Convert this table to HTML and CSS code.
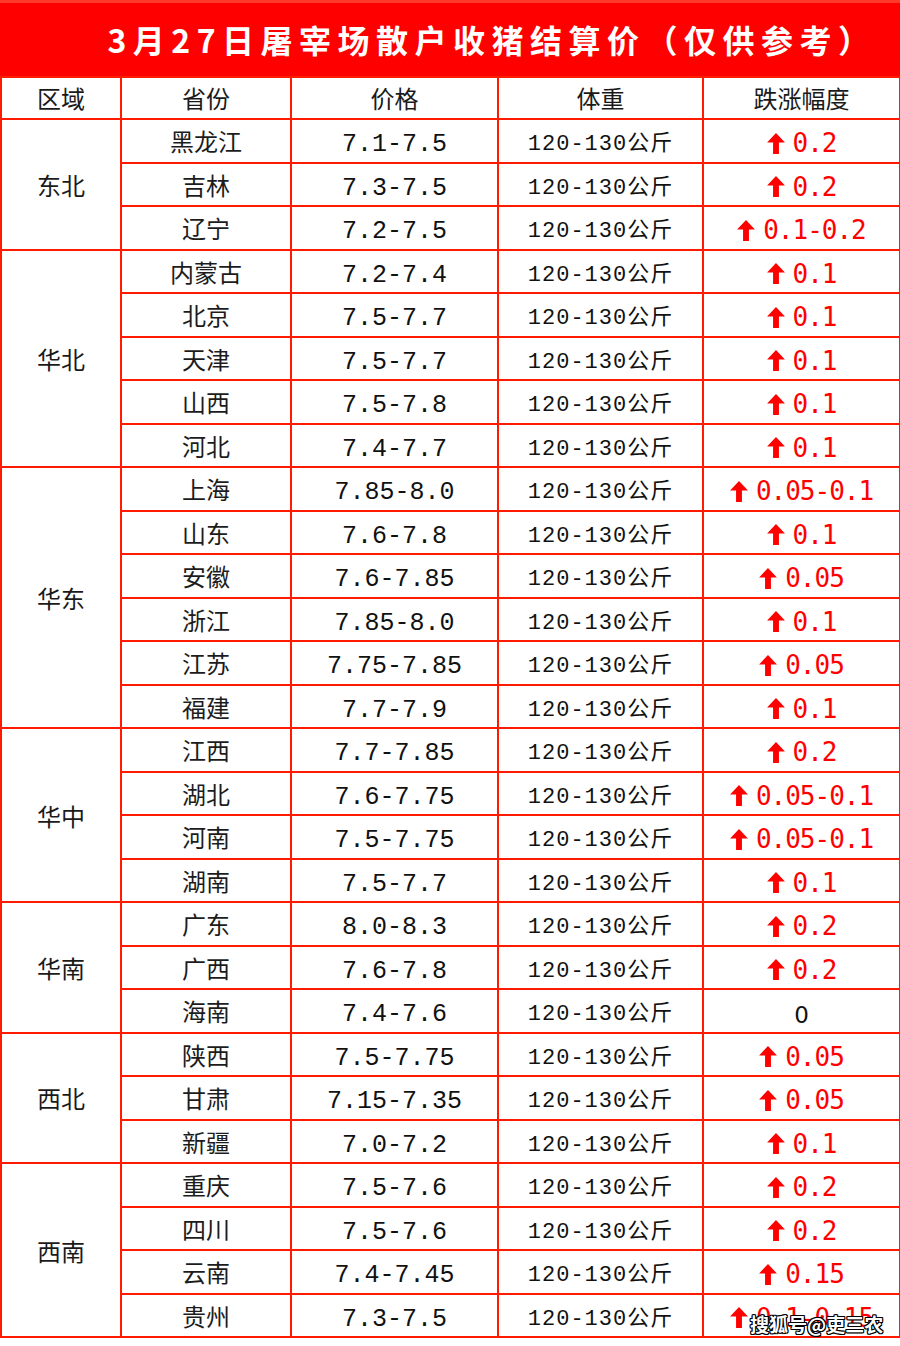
FILE: index.html
```html
<!DOCTYPE html>
<html lang="zh-CN">
<head>
<meta charset="utf-8">
<title>3月27日屠宰场散户收猪结算价</title>
<link rel="stylesheet" href="styles.css">
</head>
<body>
<svg class="defs" width="0" height="0" aria-hidden="true">
  <symbol id="up" viewBox="0 0 17 20">
    <path d="M8.5 0 L17 9 L11.3 9 L11.3 20 L5.7 20 L5.7 9 L0 9 Z" fill="#ff0000"/>
  </symbol>
</svg>
<div class="page">
  <div class="title">3月27日屠宰场散户收猪结算价（仅供参考）</div>
  <table class="grid">
    <colgroup>
      <col class="c1"><col class="c2"><col class="c3"><col class="c4"><col class="c5">
    </colgroup>
    <thead>
      <tr><th>区域</th><th>省份</th><th>价格</th><th>体重</th><th>跌涨幅度</th></tr>
    </thead>
    <tbody>
      <tr><td class="region" rowspan="3">东北</td><td class="prov">黑龙江</td><td class="price">7.1-7.5</td><td class="wt">120-130公斤</td><td class="chg"><span class="up"><svg><use href="#up"/></svg>0.2</span></td></tr>
      <tr><td class="prov">吉林</td><td class="price">7.3-7.5</td><td class="wt">120-130公斤</td><td class="chg"><span class="up"><svg><use href="#up"/></svg>0.2</span></td></tr>
      <tr class="end"><td class="prov">辽宁</td><td class="price">7.2-7.5</td><td class="wt">120-130公斤</td><td class="chg"><span class="up"><svg><use href="#up"/></svg>0.1-0.2</span></td></tr>

      <tr><td class="region" rowspan="5">华北</td><td class="prov">内蒙古</td><td class="price">7.2-7.4</td><td class="wt">120-130公斤</td><td class="chg"><span class="up"><svg><use href="#up"/></svg>0.1</span></td></tr>
      <tr><td class="prov">北京</td><td class="price">7.5-7.7</td><td class="wt">120-130公斤</td><td class="chg"><span class="up"><svg><use href="#up"/></svg>0.1</span></td></tr>
      <tr><td class="prov">天津</td><td class="price">7.5-7.7</td><td class="wt">120-130公斤</td><td class="chg"><span class="up"><svg><use href="#up"/></svg>0.1</span></td></tr>
      <tr><td class="prov">山西</td><td class="price">7.5-7.8</td><td class="wt">120-130公斤</td><td class="chg"><span class="up"><svg><use href="#up"/></svg>0.1</span></td></tr>
      <tr class="end"><td class="prov">河北</td><td class="price">7.4-7.7</td><td class="wt">120-130公斤</td><td class="chg"><span class="up"><svg><use href="#up"/></svg>0.1</span></td></tr>

      <tr><td class="region" rowspan="6">华东</td><td class="prov">上海</td><td class="price">7.85-8.0</td><td class="wt">120-130公斤</td><td class="chg"><span class="up"><svg><use href="#up"/></svg>0.05-0.1</span></td></tr>
      <tr><td class="prov">山东</td><td class="price">7.6-7.8</td><td class="wt">120-130公斤</td><td class="chg"><span class="up"><svg><use href="#up"/></svg>0.1</span></td></tr>
      <tr><td class="prov">安徽</td><td class="price">7.6-7.85</td><td class="wt">120-130公斤</td><td class="chg"><span class="up"><svg><use href="#up"/></svg>0.05</span></td></tr>
      <tr><td class="prov">浙江</td><td class="price">7.85-8.0</td><td class="wt">120-130公斤</td><td class="chg"><span class="up"><svg><use href="#up"/></svg>0.1</span></td></tr>
      <tr><td class="prov">江苏</td><td class="price">7.75-7.85</td><td class="wt">120-130公斤</td><td class="chg"><span class="up"><svg><use href="#up"/></svg>0.05</span></td></tr>
      <tr class="end"><td class="prov">福建</td><td class="price">7.7-7.9</td><td class="wt">120-130公斤</td><td class="chg"><span class="up"><svg><use href="#up"/></svg>0.1</span></td></tr>

      <tr><td class="region" rowspan="4">华中</td><td class="prov">江西</td><td class="price">7.7-7.85</td><td class="wt">120-130公斤</td><td class="chg"><span class="up"><svg><use href="#up"/></svg>0.2</span></td></tr>
      <tr><td class="prov">湖北</td><td class="price">7.6-7.75</td><td class="wt">120-130公斤</td><td class="chg"><span class="up"><svg><use href="#up"/></svg>0.05-0.1</span></td></tr>
      <tr><td class="prov">河南</td><td class="price">7.5-7.75</td><td class="wt">120-130公斤</td><td class="chg"><span class="up"><svg><use href="#up"/></svg>0.05-0.1</span></td></tr>
      <tr class="end"><td class="prov">湖南</td><td class="price">7.5-7.7</td><td class="wt">120-130公斤</td><td class="chg"><span class="up"><svg><use href="#up"/></svg>0.1</span></td></tr>

      <tr><td class="region" rowspan="3">华南</td><td class="prov">广东</td><td class="price">8.0-8.3</td><td class="wt">120-130公斤</td><td class="chg"><span class="up"><svg><use href="#up"/></svg>0.2</span></td></tr>
      <tr><td class="prov">广西</td><td class="price">7.6-7.8</td><td class="wt">120-130公斤</td><td class="chg"><span class="up"><svg><use href="#up"/></svg>0.2</span></td></tr>
      <tr class="end"><td class="prov">海南</td><td class="price">7.4-7.6</td><td class="wt">120-130公斤</td><td class="chg"><span class="flat">0</span></td></tr>

      <tr><td class="region" rowspan="3">西北</td><td class="prov">陕西</td><td class="price">7.5-7.75</td><td class="wt">120-130公斤</td><td class="chg"><span class="up"><svg><use href="#up"/></svg>0.05</span></td></tr>
      <tr><td class="prov">甘肃</td><td class="price">7.15-7.35</td><td class="wt">120-130公斤</td><td class="chg"><span class="up"><svg><use href="#up"/></svg>0.05</span></td></tr>
      <tr class="end"><td class="prov">新疆</td><td class="price">7.0-7.2</td><td class="wt">120-130公斤</td><td class="chg"><span class="up"><svg><use href="#up"/></svg>0.1</span></td></tr>

      <tr><td class="region" rowspan="4">西南</td><td class="prov">重庆</td><td class="price">7.5-7.6</td><td class="wt">120-130公斤</td><td class="chg"><span class="up"><svg><use href="#up"/></svg>0.2</span></td></tr>
      <tr><td class="prov">四川</td><td class="price">7.5-7.6</td><td class="wt">120-130公斤</td><td class="chg"><span class="up"><svg><use href="#up"/></svg>0.2</span></td></tr>
      <tr><td class="prov">云南</td><td class="price">7.4-7.45</td><td class="wt">120-130公斤</td><td class="chg"><span class="up"><svg><use href="#up"/></svg>0.15</span></td></tr>
      <tr class="end"><td class="prov">贵州</td><td class="price">7.3-7.5</td><td class="wt">120-130公斤</td><td class="chg"><span class="up"><svg><use href="#up"/></svg>0.1-0.15</span></td></tr>
    </tbody>
  </table>
  <div class="watermark">搜狐号@吏三农</div>
</div>
</body>
</html>
```

FILE: styles.css
```css
html, body {
  margin: 0;
  padding: 0;
  background: #ffffff;
}

.defs {
  position: absolute;
  width: 0;
  height: 0;
  overflow: hidden;
}

.page {
  position: relative;
  width: 900px;
  font-family: "Noto Sans CJK SC", "Noto Sans", sans-serif;
  color: #111111;
}

.title {
  height: 76px;
  box-sizing: border-box;
  background: #ff0000;
  border-top: 3px solid #ff3a2a;
  color: #ffffff;
  font-weight: 700;
  font-size: 32px;
  letter-spacing: 6.5px;
  line-height: 73px;
  text-align: center;
  padding-left: 84px;
  white-space: nowrap;
}

.grid {
  width: 899px;
  border-collapse: collapse;
  table-layout: fixed;
}

.c1 { width: 120px; }
.c2 { width: 170px; }
.c3 { width: 207px; }
.c4 { width: 205px; }
.c5 { width: 197px; }

.grid th,
.grid td {
  border: 2px solid #ff1a00;
  padding: 0;
  text-align: center;
  vertical-align: middle;
  font-weight: 400;
  white-space: nowrap;
}

.grid th {
  height: 40px;
  font-size: 24px;
  line-height: 40px;
  color: #1a1a1a;
}

.grid td {
  height: 41.5px;
}

.region {
  font-size: 24px;
  color: #1a1a1a;
}

.prov {
  font-size: 24px;
  color: #1c1c1c;
}

.grid td.price {
  font-family: "Liberation Mono", "DejaVu Sans Mono", monospace;
  font-size: 25px;
  color: #111111;
  padding-top: 8px;
  height: 33.5px;
}

.wt {
  font-family: "Liberation Mono", "Noto Sans CJK SC", monospace;
  font-size: 22px;
  letter-spacing: 1px;
  color: #111111;
}

.grid td.chg {
  font-family: "DejaVu Sans Mono", "Liberation Mono", monospace;
  font-size: 26px;
  letter-spacing: -1px;
  color: #ff0000;
  padding-top: 6px;
  height: 35.5px;
}

.up {
  display: inline-flex;
  align-items: center;
  gap: 8px;
}

.up svg {
  width: 18px;
  height: 21px;
  flex: none;
}

.flat {
  color: #111111;
  font-family: "DejaVu Sans", sans-serif;
  font-size: 23px;
  letter-spacing: 0;
}

.watermark {
  position: absolute;
  left: 750px;
  top: 1310px;
  font-size: 19px;
  font-weight: 700;
  color: #ffffff;
  letter-spacing: 0;
  text-shadow:
    -1px -1px 0 #000, 1px -1px 0 #000, -1px 1px 0 #000, 1px 1px 0 #000,
    0 -1px 0 #000, 0 1px 0 #000, -1px 0 0 #000, 1px 0 0 #000;
}
```
